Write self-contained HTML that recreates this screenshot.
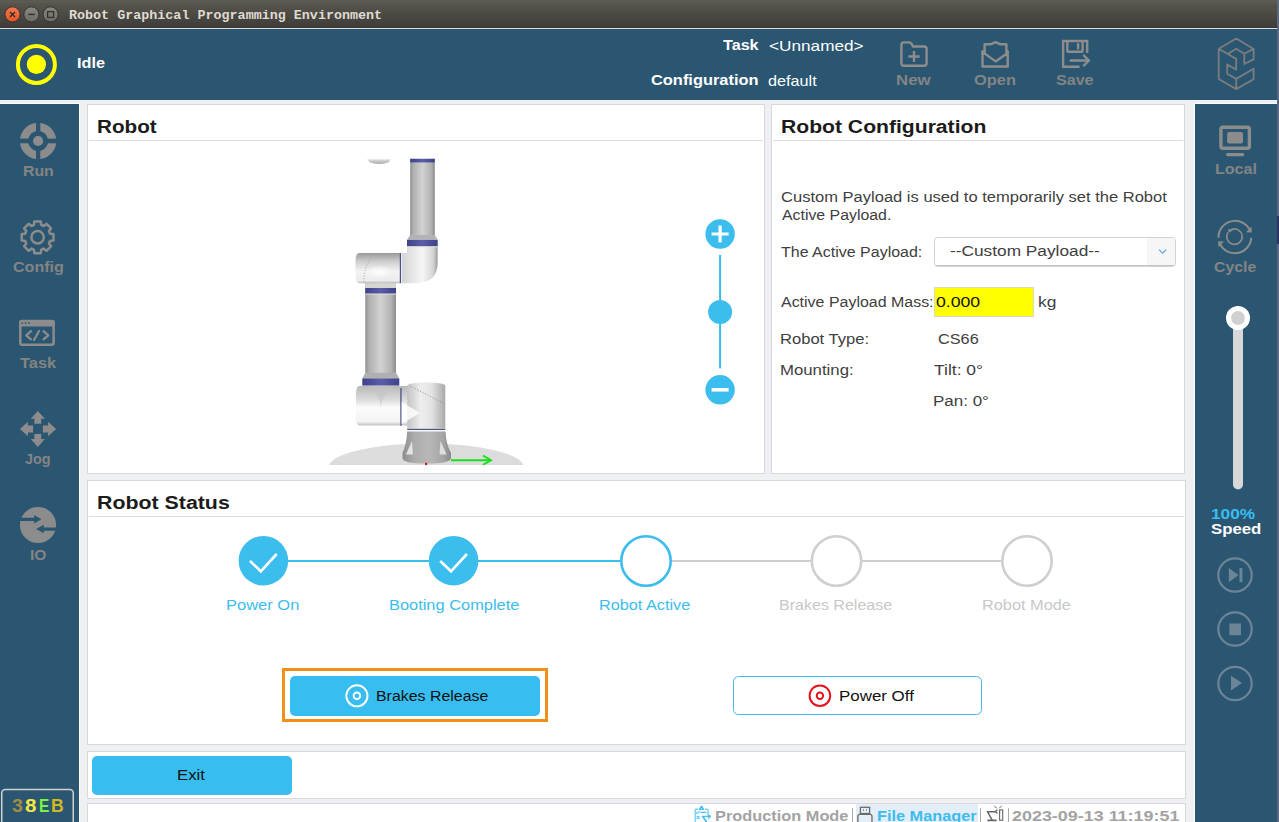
<!DOCTYPE html>
<html><head><meta charset="utf-8">
<style>
*{margin:0;padding:0;box-sizing:border-box}
html,body{width:1279px;height:822px;overflow:hidden;background:#eff0f4;font-family:"Liberation Sans",sans-serif;position:relative}
.a{position:absolute}
.tx{position:absolute;white-space:pre;transform-origin:0 0}
svg{position:absolute;overflow:visible}
#title{left:0;top:0;width:1279px;height:28px;background:linear-gradient(#5b5850 0px,#5e5b52 1.5px,#57544c 4px,#3f3d39 27px,#36342f 28px)}
#hdrline{left:0;top:28px;width:1279px;height:1px;background:#dcdcdc}
#hdr{left:0;top:29px;width:1279px;height:71px;background:#2b5671}
#lside{left:0;top:104px;width:79px;height:718px;background:#2b5671}
#rside{left:1195px;top:104px;width:84px;height:718px;background:#2b5671}
.panel{position:absolute;background:#fff;border:1px solid #d9d9d9}
.hl{position:absolute;height:1px;background:#dcdcdc}
</style></head><body>
<div id="title" class="a"></div>
<div id="hdrline" class="a"></div>
<div id="hdr" class="a"></div>
<div class="a" style="left:0;top:100px;width:1279px;height:4px;background:#eff0f4"></div>
<div id="lside" class="a"></div>
<div class="a" style="left:0;top:103px;width:79px;height:1px;background:#fbfbfc"></div>
<div class="a" style="left:79px;top:103px;width:1px;height:719px;background:#fbfbfc"></div>
<div id="rside" class="a"></div>
<div class="a" style="left:1194px;top:103px;width:1px;height:719px;background:#fbfbfc"></div>
<div class="a" style="left:1194px;top:103px;width:85px;height:1px;background:#fbfbfc"></div>

<!-- panels -->
<div class="panel" style="left:87px;top:104px;width:678px;height:370px"></div>
<div class="hl" style="left:89px;top:140px;width:674px"></div>
<div class="panel" style="left:771px;top:104px;width:414px;height:370px"></div>
<div class="hl" style="left:773px;top:140px;width:410px"></div>
<div class="panel" style="left:87px;top:480px;width:1099px;height:265px"></div>
<div class="hl" style="left:89px;top:516px;width:1095px"></div>
<div class="panel" style="left:87px;top:751px;width:1099px;height:48px"></div>
<div class="panel" style="left:87px;top:803px;width:1099px;height:30px"></div>

<!--ICONS-->
<svg width="1279" height="822" viewBox="0 0 1279 822" style="left:0;top:0">
<defs>
<linearGradient id="tubeH" x1="0" y1="0" x2="1" y2="0">
<stop offset="0" stop-color="#8e8e8e"/><stop offset="0.12" stop-color="#b0b0b0"/><stop offset="0.5" stop-color="#d2d2d2"/><stop offset="0.85" stop-color="#b2b2b2"/><stop offset="1" stop-color="#8c8c8c"/>
</linearGradient>
<linearGradient id="elbowH" x1="0" y1="0" x2="1" y2="0">
<stop offset="0" stop-color="#cfcfcf"/><stop offset="0.3" stop-color="#e4e4e4"/><stop offset="0.6" stop-color="#f6f6f6"/><stop offset="0.88" stop-color="#d4d4d4"/><stop offset="1" stop-color="#9c9c9c"/>
</linearGradient>
<linearGradient id="jointV" x1="0" y1="0" x2="0" y2="1">
<stop offset="0" stop-color="#9a9a9a"/><stop offset="0.3" stop-color="#d0d0d0"/><stop offset="0.6" stop-color="#f2f2f2"/><stop offset="0.92" stop-color="#ececec"/><stop offset="1" stop-color="#b8b8b8"/>
</linearGradient>
<linearGradient id="jointV2" x1="0" y1="0" x2="0" y2="1">
<stop offset="0" stop-color="#b8b8b8"/><stop offset="0.35" stop-color="#dcdcdc"/><stop offset="0.55" stop-color="#fcfcfc"/><stop offset="0.9" stop-color="#f4f4f4"/><stop offset="1" stop-color="#c0c0c0"/>
</linearGradient>
<linearGradient id="bjH" x1="0" y1="0" x2="1" y2="0">
<stop offset="0" stop-color="#c4c4c4"/><stop offset="0.35" stop-color="#ededed"/><stop offset="0.65" stop-color="#e2e2e2"/><stop offset="1" stop-color="#a8a8a8"/>
</linearGradient>
<linearGradient id="baseH" x1="0" y1="0" x2="1" y2="0">
<stop offset="0" stop-color="#8c8c8c"/><stop offset="0.25" stop-color="#adadad"/><stop offset="0.55" stop-color="#b8b8b8"/><stop offset="0.85" stop-color="#a4a4a4"/><stop offset="1" stop-color="#888888"/>
</linearGradient>
<linearGradient id="bandH" x1="0" y1="0" x2="1" y2="0">
<stop offset="0" stop-color="#3f4288"/><stop offset="0.5" stop-color="#5a5da8"/><stop offset="1" stop-color="#3f4288"/>
</linearGradient>
<linearGradient id="diskV" x1="0" y1="0" x2="0" y2="1">
<stop offset="0" stop-color="#e6e6e6"/><stop offset="1" stop-color="#a8a8a8"/>
</linearGradient>
<radialGradient id="hiX" cx="0.5" cy="0.5" r="0.5"><stop offset="0" stop-color="#ffffff" stop-opacity="0.9"/><stop offset="1" stop-color="#ffffff" stop-opacity="0"/></radialGradient>
<clipPath id="vclip"><rect x="88" y="141" width="676" height="324"/></clipPath>
</defs>
<g clip-path="url(#vclip)">
<!-- floor -->
<ellipse cx="426.3" cy="467" rx="97.5" ry="23.5" fill="#dcdcdc"/>
<!-- floating disk -->
<path d="M367.2 158.9 H391.2 L388.8 162.2 Q385 163.9 379.2 163.9 Q373.4 163.9 369.6 162.2 Z" fill="url(#diskV)"/><path d="M367.6 159.3 H390.8" stroke="#f0f0f0" stroke-width="0.8"/>
<!-- upper tube -->
<rect x="410.2" y="158.8" width="24.6" height="78" fill="url(#tubeH)"/>
<rect x="410.2" y="158.8" width="24.6" height="3.6" fill="url(#bandH)"/>
<path d="M410.2 235 H434.8 L437.7 239.8 H407 Z" fill="#b4b4b4"/>
<!-- elbow -->
<path d="M407 246.6 H437.7 V262 Q437.7 283.2 416 283.2 H400 V253 H407 Z" fill="url(#elbowH)"/>
<rect x="407" y="239.8" width="30.7" height="6.8" fill="url(#bandH)"/>
<path d="M407 246.8 H437.7" stroke="#e8e8dc" stroke-width="1"/>
<!-- horizontal wrist joint -->
<path d="M359.5 253 H400.2 V283.2 H359.5 Q355.5 283.2 355.5 275 V261 Q355.5 253 359.5 253 Z" fill="url(#jointV)"/>
<ellipse cx="379" cy="272" rx="14" ry="7" fill="url(#hiX)"/>
<path d="M373 255 Q363 268 364 283" fill="none" stroke="#9a9a9a" stroke-width="0.8" stroke-dasharray="1.2 1.6"/>
<rect x="399.8" y="253" width="1.2" height="30.2" fill="#4a4f86"/>
<rect x="401" y="253" width="0.8" height="30.2" fill="#f4f4f4"/>
<!-- lower tube -->
<rect x="365.3" y="283" width="30.7" height="91" fill="url(#tubeH)"/>
<path d="M365.3 283.2 H396 V288 H365.3 Z" fill="#d6d6d0"/>
<rect x="365.3" y="288" width="30.7" height="6" fill="url(#bandH)"/>
<path d="M365.3 294 H396" stroke="#e4e4dc" stroke-width="1"/>
<path d="M365.3 372.7 H396 L399.3 378.4 H362.3 Z" fill="#b0b0b0"/>
<rect x="362.3" y="378.4" width="37" height="7.2" fill="url(#bandH)"/>
<!-- lower horizontal joint -->
<path d="M359.5 386 H408 V425.5 H359.5 Q355.9 425.5 355.9 417 V395 Q355.9 386 359.5 386 Z" fill="url(#jointV2)"/>
<path d="M368 386 Q381 396 381 408 Q381 396 394 386 Z" fill="#c4c4c4" opacity="0.55"/>
<rect x="400.3" y="388" width="1.3" height="37.6" fill="#4a4f86"/>
<!-- base joint vertical -->
<path d="M407.2 386 Q407.2 382.5 426.2 382.5 Q445.3 382.5 445.3 386 V428.5 H407.2 Z" fill="url(#bjH)"/>
<path d="M401.6 402 L420 413 L401.6 424 Z" fill="#ffffff" opacity="0.8"/>
<path d="M410 386 L445 404" fill="none" stroke="#8a8a8a" stroke-width="0.8" stroke-dasharray="1.2 1.6"/>
<path d="M407.2 429.3 H445.3" stroke="#4e5484" stroke-width="1.3"/>
<path d="M408 430.9 H444.5" stroke="#f0f0f0" stroke-width="1"/>
<!-- base -->
<path d="M407.2 431.4 H445.6 Q446 444 451 453 V458 Q451 463.5 426.2 463.5 Q402.5 463.5 402.5 458 V453 Q406.5 444 407.2 431.4 Z" fill="url(#baseH)"/>
<path d="M412 441 L406 454.5 H413 Z" fill="#e4e4e4"/>
<path d="M440.5 441 L446.5 454.5 H439.5 Z" fill="#e0e0e0"/>
<!-- axes -->
<path d="M451 460.2 H490" stroke="#16e016" stroke-width="1.9"/>
<path d="M483 455.5 L491 460.2 L483 464.8" fill="none" stroke="#16e016" stroke-width="1.9"/>
<rect x="425" y="462.8" width="2.2" height="2.2" fill="#ee1111"/>
</g>
</svg>

<svg width="1279" height="822" viewBox="0 0 1279 822" style="left:0;top:0">
<defs>
<linearGradient id="gClose" x1="0" y1="0" x2="0" y2="1"><stop offset="0" stop-color="#f47a52"/><stop offset="1" stop-color="#e6531f"/></linearGradient>
<linearGradient id="gGray" x1="0" y1="0" x2="0" y2="1"><stop offset="0" stop-color="#8a8984"/><stop offset="1" stop-color="#6b6a65"/></linearGradient>
</defs>
<!-- title buttons -->
<circle cx="12.5" cy="14.4" r="7.6" fill="url(#gClose)" stroke="#33322e" stroke-width="1"/>
<path d="M10 12 L15 17 M15 12 L10 17" stroke="#2f2e2a" stroke-width="1.4"/>
<circle cx="31.4" cy="14.4" r="7.6" fill="url(#gGray)" stroke="#33322e" stroke-width="1"/>
<path d="M28.2 14.4 H34.8" stroke="#33322e" stroke-width="1.5"/>
<circle cx="50.6" cy="14.4" r="7.6" fill="url(#gGray)" stroke="#33322e" stroke-width="1"/>
<rect x="47.6" y="11.6" width="6" height="5.8" fill="none" stroke="#33322e" stroke-width="1.3"/>
<!-- idle -->
<circle cx="36.4" cy="64.4" r="18.5" fill="none" stroke="#ffff00" stroke-width="4"/>
<circle cx="36.4" cy="64.4" r="9.6" fill="#ffff00"/>
<!-- new/open/save -->
<g fill="none" stroke="#8d8d8d" stroke-width="2.4" stroke-linejoin="round" stroke-linecap="round">
<path d="M901.4 63.2 V44.9 Q901.4 42.4 903.9 42.4 H909.5 Q910.6 42.4 911.2 43.4 L913.2 46.5 H924.1 Q926.6 46.5 926.6 49 V63.2 Q926.6 65.7 924.1 65.7 H903.9 Q901.4 65.7 901.4 63.2 Z"/>
<path d="M908.4 56.5 H919.6 M914 50.9 V62.1" stroke-linecap="butt"/>
<path d="M984.6 52.4 V44.3 H990.4 L995.6 42.2 L1000.4 44.3 H1006.4 V52.4"/>
<path d="M982.5 52 L984.6 50.7 M1007.7 52 L1006.4 50.7" />
<path d="M982.5 51.5 V66.5 H1007.7 V51.5 M983.8 52.9 L995.6 61.4 L1007.7 52.9"/>
<path d="M1079.6 66.7 H1063.1 V41 H1087.2 V52.9" stroke-linejoin="miter" stroke-linecap="butt"/>
<path d="M1067.3 41 V50.5 Q1067.3 51.8 1068.6 51.8 H1081.3 Q1082.6 51.8 1082.6 50.5 V41" stroke-linecap="butt"/>
<path d="M1078.1 44.3 V48.3"/>
<path d="M1070.6 60.5 H1089 M1083.9 55.5 L1089 60.5 L1083.9 65.5"/>
</g>
<!-- logo -->
<g fill="none" stroke="#7a7c7e" stroke-width="1.8" stroke-linejoin="round">
<path d="M1236.2 38.5 L1253.6 48.9 V59.4 L1244.3 64 V53.8 L1236.2 48.7 L1228 53.8 M1218.7 48.7 L1236.2 38.5 M1218.7 48.7 V79 L1236.2 89.1 L1253.6 79.2 V68.7 L1236.2 78.9 L1227.2 73.8 V64.5 L1236.2 69.6 V58.9 L1218.7 48.7 M1236.2 78.9 V89.1 M1244.3 53.8 L1253.6 48.9"/>
</g>

<!-- left sidebar icons -->
<g fill="#8c8c8c">
<path fill-rule="evenodd" d="M38.1 122.8 A18.2 18.2 0 1 1 38.09 122.8 Z M38.1 131 A10 10 0 1 0 38.11 131 Z"/>
<circle cx="38.1" cy="141" r="5.1"/>
</g>
<g fill="#2b5671"><rect x="36" y="120" width="4.3" height="12"/><rect x="36" y="150" width="4.3" height="12"/><rect x="17" y="138.6" width="12" height="4.7"/><rect x="47.2" y="138.6" width="12" height="4.7"/></g>
<!-- gear -->
<g fill="none" stroke="#8c8c8c" stroke-width="2.5" stroke-linejoin="round">
<path id="gearp" d="M33.94 224.93 L34.37 221.43 L40.83 221.43 L41.26 224.93 A12.9 12.9 0 0 1 43.76 225.96 L46.54 223.79 L51.11 228.36 L48.94 231.14 A12.9 12.9 0 0 1 49.97 233.64 L53.47 234.07 L53.47 240.53 L49.97 240.96 A12.9 12.9 0 0 1 48.94 243.46 L51.11 246.24 L46.54 250.81 L43.76 248.64 A12.9 12.9 0 0 1 41.26 249.67 L40.83 253.17 L34.37 253.17 L33.94 249.67 A12.9 12.9 0 0 1 31.44 248.64 L28.66 250.81 L24.09 246.24 L26.26 243.46 A12.9 12.9 0 0 1 25.23 240.96 L21.73 240.53 L21.73 234.07 L25.23 233.64 A12.9 12.9 0 0 1 26.26 231.14 L24.09 228.36 L28.66 223.79 L31.44 225.96 A12.9 12.9 0 0 1 33.94 224.93 Z"/>
<circle cx="37.6" cy="237.3" r="6.2"/>
</g>
<!-- task -->
<g fill="none" stroke="#8c8c8c" stroke-width="2.5">
<rect x="20.3" y="321.1" width="33.3" height="23.6" rx="2"/>
</g>
<rect x="19.1" y="319.9" width="35.7" height="6.5" rx="2" fill="#8c8c8c"/>
<g fill="#2b5671"><circle cx="22.2" cy="323.1" r="0.9"/><circle cx="25.6" cy="323.1" r="0.9"/><circle cx="29" cy="323.1" r="0.9"/></g>
<g fill="none" stroke="#8c8c8c" stroke-width="2.2" stroke-linecap="round" stroke-linejoin="round">
<path d="M31 331.2 L26.2 335.3 L31 339.4 M39 331 L34 340 M43.5 331.2 L48.3 335.3 L43.5 339.4" />
</g>
<!-- jog -->
<g fill="#8c8c8c">
<path d="M37.8 410.9 L44.8 418.7 H41.2 V423.8 H34.4 V418.7 H30.8 Z"/>
<path d="M37.8 446.9 L44.8 439.1 H41.2 V434.0 H34.4 V439.1 H30.8 Z"/>
<path d="M19.9 429 L27.9 421.8 V425.6 H33.1 V432.4 H27.9 V436.2 Z"/>
<path d="M56.1 429 L48.1 421.8 V425.6 H42.9 V432.4 H48.1 V436.2 Z"/>
</g>
<!-- io -->
<circle cx="38" cy="525" r="18.1" fill="#8c8c8c"/>
<g fill="#2b5671">
<path d="M18 517.8 H34.2 V515 L41.4 519.3 L34.2 523.6 V521 H18 Z"/>
<path d="M58 527.4 H43.8 V524.8 L36.1 529.1 L43.8 533.3 V530.8 H58 Z"/>
</g>

<!-- local -->
<rect x="1220.9" y="127.3" width="28.5" height="20.9" rx="2" fill="none" stroke="#8c8c8c" stroke-width="3.4"/>
<rect x="1227.1" y="132" width="15.9" height="11.5" rx="2" fill="#8c8c8c"/>
<rect x="1226" y="152.9" width="18.3" height="3.4" rx="1.7" fill="#8c8c8c"/>
<!-- cycle -->
<g fill="none" stroke="#8c8c8c" stroke-width="2" stroke-linecap="butt">
<path d="M1218.5 237.8 A16.5 16.5 0 0 1 1250.6 232"/>
<path d="M1251.3 237.8 A16.5 16.5 0 0 1 1219.2 242"/>
<path d="M1228 232.5 A7.7 7.7 0 1 0 1231 229.8" stroke-width="1.6"/>
</g>
<g fill="#8c8c8c">
<path d="M1251.6 226.5 L1251.6 232.5 L1246 232.3 Z"/>
<path d="M1218.3 247.3 L1218.3 241.2 L1223.8 241.5 Z"/>
<path d="M1228.6 228.4 L1233 230.5 L1228.2 232.7 Z"/>
</g>
<!-- slider -->
<rect x="1233" y="318" width="10" height="171.5" rx="5" fill="#d8d8d8"/>
<circle cx="1238" cy="318" r="12" fill="#ffffff"/>
<circle cx="1238" cy="318" r="6.9" fill="#d0d0d0"/>
<!-- run controls -->
<g fill="none" stroke="#6b8596" stroke-width="2.2">
<circle cx="1235" cy="575" r="16.7"/>
<circle cx="1235" cy="629" r="16.7"/>
<circle cx="1235" cy="683.5" r="16.7"/>
</g>
<g fill="#6b8596">
<path d="M1228.8 568 L1238.5 575.1 L1228.8 582.2 Z"/>
<rect x="1239.5" y="568" width="2.9" height="14.2"/>
<rect x="1229.4" y="623.5" width="11.6" height="11.7"/>
<path d="M1231 675.7 L1242 683 L1231 690.4 Z"/>
</g>
<!-- badge -->
<rect x="1.75" y="789.6" width="71.5" height="40" rx="3.5" fill="none" stroke="#d0d0d0" stroke-width="1.5"/>
<!-- right edge strip -->
<rect x="1277" y="0" width="2" height="822" fill="#5b6a80"/>
<rect x="1277" y="216" width="2" height="28" fill="#2f3262"/>

<!-- status steps -->
<path d="M288 561 H620 M672 561" stroke="#3bbdee" stroke-width="2"/>
<path d="M672 561 H1001" stroke="#cfcfcf" stroke-width="2"/>
<circle cx="263.4" cy="560.7" r="24.8" fill="#3bbdee"/>
<circle cx="453.6" cy="560.7" r="24.8" fill="#3bbdee"/>
<g fill="none" stroke="#fff" stroke-width="2.6" stroke-linejoin="miter"><path d="M250 561 L260.8 571.3 L276.7 554"/><path d="M440.2 561 L451 571.3 L466.9 554"/></g>
<circle cx="646" cy="561" r="24.7" fill="#fff" stroke="#3bbdee" stroke-width="2.6"/>
<circle cx="836.5" cy="561" r="24.7" fill="#fff" stroke="#cfcfcf" stroke-width="2.6"/>
<circle cx="1027" cy="561" r="24.7" fill="#fff" stroke="#cfcfcf" stroke-width="2.6"/>
<!-- buttons -->
<rect x="283.5" y="669.5" width="263" height="51" fill="none" stroke="#f09019" stroke-width="3"/>
<rect x="290" y="676" width="250" height="40" rx="5" fill="#38bdf0"/>
<circle cx="356.9" cy="695.8" r="10.6" fill="none" stroke="#fff" stroke-width="1.9"/>
<circle cx="356.9" cy="695.8" r="3.3" fill="none" stroke="#fff" stroke-width="1.9"/>
<rect x="733.5" y="676.5" width="248" height="38" rx="5" fill="#fff" stroke="#3bbdee" stroke-width="1"/>
<circle cx="819.9" cy="695.7" r="10.3" fill="none" stroke="#e8101a" stroke-width="2"/>
<circle cx="819.9" cy="695.7" r="3.2" fill="none" stroke="#e8101a" stroke-width="2"/>
<rect x="92" y="756" width="200" height="39" rx="5" fill="#38bdf0"/>
<!-- zoom controls -->
<path d="M720.1 254.8 V368.4" stroke="#3bbdee" stroke-width="2"/>
<circle cx="720.1" cy="234" r="14.7" fill="#3bbdee"/>
<circle cx="720.1" cy="311.9" r="12" fill="#3bbdee"/>
<circle cx="720.1" cy="389.8" r="14.7" fill="#3bbdee"/>
<path d="M711.6 234 H728.6 M720.1 225.5 V242.5" stroke="#fff" stroke-width="3.2"/>
<path d="M711.6 389.8 H728.6" stroke="#fff" stroke-width="3.6"/>
<!-- dropdown -->
<rect x="934.5" y="237.5" width="241" height="29" rx="3" fill="#fff" stroke="#d2d2d2" stroke-width="1"/>
<path d="M936 265.5 H1174" stroke="#c4c4c4" stroke-width="1.2"/>
<rect x="1147" y="238" width="28" height="27" fill="#f6f6f6"/>
<path d="M1159 249.6 L1162.6 253.2 L1166.2 249.6" fill="none" stroke="#5aa5e0" stroke-width="1.2"/>
<!-- mass input -->
<rect x="934.5" y="287.5" width="99" height="29" fill="#ffff00" stroke="#d8d8c0" stroke-width="1"/>
<!-- status bar -->
<rect x="856" y="804" width="122" height="18" fill="#e4eef8"/>

<!-- status bar icons -->
<g fill="none" stroke="#48bff0" stroke-width="1.4" stroke-linecap="round" stroke-linejoin="round">
<path d="M695.2 822 V810 Q695.2 809.3 696.2 809.3 H697.5 M705.5 809.3 H707.2 Q708.1 809.3 708.1 810.2 V815.2" opacity="0.75"/>
<path d="M699.5 809.2 L701.5 806.2 L703.5 809.2 Z"/>
<path d="M701.2 812.4 H706"/>
<path d="M696.3 812.3 L697.5 813.6 L699.5 811.2" opacity="0.7"/>
<path d="M697 816.5 L699.2 818.6 M699.2 816.5 L697 818.6" opacity="0.8"/>
<path d="M702.5 816.4 H710.3 M708.6 815 L710.3 816.4 L708.6 818" />
<path d="M703 816.8 L706.5 822" stroke-width="1.8"/>
</g>
<g stroke="#a8a8a8" stroke-width="1"><path d="M852.5 808.2 V822 M980.5 808.2 V822 M1008.5 808.2 V822"/></g>
<g fill="none" stroke="#6a6a6a" stroke-width="1.3">
<rect x="860.4" y="807.3" width="9.2" height="6.2"/>
<path d="M857.9 822 V816.3 Q857.9 814.3 859.9 814.3 H870 Q872 814.3 872 816.3 V822"/>
</g>
<g fill="#6a6a6a"><rect x="863" y="809.3" width="0.9" height="1.5"/><rect x="866.1" y="809.3" width="0.9" height="1.5"/></g>
<g fill="none" stroke="#666" stroke-width="1.3" stroke-linecap="round">
<path d="M988.1 820.4 H995.8" stroke-width="1.8"/>
<path d="M991.9 819.6 L987.6 811.8 H995.4" stroke-width="1.5"/>
<path d="M995.4 811.5 L997 810 M995.4 811.5 L997 813"/>
<rect x="999.6" y="809.9" width="3.1" height="10.3" stroke-width="1.1"/>
<path d="M994.5 806 L996.5 808 M1001.5 806 L999.5 808" stroke-width="1"/>
</g>
</svg>


<div class="tx" style="left:69.26px;top:9px;font-size:13.33px;line-height:13.33px;font-weight:bold;color:#dfdbd2;font-family:'Liberation Mono';transform:scaleX(1.0038);">Robot Graphical Programming Environment</div>
<div class="tx" style="left:76.58px;top:56px;font-size:14.3px;line-height:14.3px;font-weight:bold;color:#ffffff;font-family:'Liberation Sans';transform:scaleX(1.1375);">Idle</div>
<div class="tx" style="left:722.50px;top:38px;font-size:14.3px;line-height:14.3px;font-weight:bold;color:#ffffff;font-family:'Liberation Sans';transform:scaleX(1.1289);">Task</div>
<div class="tx" style="left:769.19px;top:39px;font-size:14.6px;line-height:14.6px;font-weight:normal;color:#ffffff;font-family:'Liberation Sans';transform:scaleX(1.1778);">&lt;Unnamed&gt;</div>
<div class="tx" style="left:651.09px;top:73px;font-size:14.3px;line-height:14.3px;font-weight:bold;color:#ffffff;font-family:'Liberation Sans';transform:scaleX(1.1470);">Configuration</div>
<div class="tx" style="left:768.29px;top:74px;font-size:14.6px;line-height:14.6px;font-weight:normal;color:#ffffff;font-family:'Liberation Sans';transform:scaleX(1.1098);">default</div>
<div class="tx" style="left:896.35px;top:73px;font-size:14.3px;line-height:14.3px;font-weight:bold;color:#848484;font-family:'Liberation Sans';transform:scaleX(1.1765);">New</div>
<div class="tx" style="left:974.39px;top:73px;font-size:14.3px;line-height:14.3px;font-weight:bold;color:#848484;font-family:'Liberation Sans';transform:scaleX(1.1495);">Open</div>
<div class="tx" style="left:1056.45px;top:73px;font-size:14.3px;line-height:14.3px;font-weight:bold;color:#848484;font-family:'Liberation Sans';transform:scaleX(1.1244);">Save</div>
<div class="tx" style="left:22.61px;top:164px;font-size:14.3px;line-height:14.3px;font-weight:bold;color:#848484;font-family:'Liberation Sans';transform:scaleX(1.1064);">Run</div>
<div class="tx" style="left:12.60px;top:260px;font-size:14.3px;line-height:14.3px;font-weight:bold;color:#848484;font-family:'Liberation Sans';transform:scaleX(1.1251);">Config</div>
<div class="tx" style="left:19.90px;top:356px;font-size:14.3px;line-height:14.3px;font-weight:bold;color:#848484;font-family:'Liberation Sans';transform:scaleX(1.1447);">Task</div>
<div class="tx" style="left:25.00px;top:452px;font-size:14.3px;line-height:14.3px;font-weight:bold;color:#848484;font-family:'Liberation Sans';transform:scaleX(1.0078);">Jog</div>
<div class="tx" style="left:29.53px;top:548px;font-size:14.3px;line-height:14.3px;font-weight:bold;color:#848484;font-family:'Liberation Sans';transform:scaleX(1.0866);">IO</div>
<div class="tx" style="left:1214.80px;top:162px;font-size:14.3px;line-height:14.3px;font-weight:bold;color:#848484;font-family:'Liberation Sans';transform:scaleX(1.1233);">Local</div>
<div class="tx" style="left:1214.41px;top:260px;font-size:14.3px;line-height:14.3px;font-weight:bold;color:#848484;font-family:'Liberation Sans';transform:scaleX(1.1056);">Cycle</div>
<div class="tx" style="left:1211.22px;top:507px;font-size:14.3px;line-height:14.3px;font-weight:bold;color:#38bdf0;font-family:'Liberation Sans';transform:scaleX(1.2092);">100%</div>
<div class="tx" style="left:1211.44px;top:522px;font-size:14.3px;line-height:14.3px;font-weight:bold;color:#ffffff;font-family:'Liberation Sans';transform:scaleX(1.1729);">Speed</div>
<div class="tx" style="left:12.39px;top:797px;font-size:18.6px;line-height:18.6px;font-weight:bold;color:#a08c44;font-family:'Liberation Sans';transform:scaleX(1.0635);">3</div>
<div class="tx" style="left:25.26px;top:797px;font-size:18.6px;line-height:18.6px;font-weight:bold;color:#f2e646;font-family:'Liberation Sans';transform:scaleX(1.1075);">8</div>
<div class="tx" style="left:39.04px;top:797px;font-size:18.6px;line-height:18.6px;font-weight:bold;color:#7cf442;font-family:'Liberation Sans';transform:scaleX(0.8277);">E</div>
<div class="tx" style="left:50.90px;top:797px;font-size:18.6px;line-height:18.6px;font-weight:bold;color:#d2b81e;font-family:'Liberation Sans';transform:scaleX(0.9462);">B</div>
<div class="tx" style="left:97.01px;top:118px;font-size:18.8px;line-height:18.8px;font-weight:bold;color:#1b1b1b;font-family:'Liberation Sans';transform:scaleX(1.0995);">Robot</div>
<div class="tx" style="left:780.88px;top:118px;font-size:18.8px;line-height:18.8px;font-weight:bold;color:#1b1b1b;font-family:'Liberation Sans';transform:scaleX(1.1248);">Robot Configuration</div>
<div class="tx" style="left:780.93px;top:189px;font-size:15.5px;line-height:15.5px;font-weight:normal;color:#404040;font-family:'Liberation Sans';transform:scaleX(1.0663);">Custom Payload is used to temporarily set the Robot</div>
<div class="tx" style="left:781.70px;top:207px;font-size:15.5px;line-height:15.5px;font-weight:normal;color:#404040;font-family:'Liberation Sans';transform:scaleX(1.0234);">Active Payload.</div>
<div class="tx" style="left:781.15px;top:244px;font-size:15.5px;line-height:15.5px;font-weight:normal;color:#404040;font-family:'Liberation Sans';transform:scaleX(1.0315);">The Active Payload:</div>
<div class="tx" style="left:950.36px;top:243px;font-size:15.5px;line-height:15.5px;font-weight:normal;color:#404040;font-family:'Liberation Sans';transform:scaleX(1.1146);">--Custom Payload--</div>
<div class="tx" style="left:781.40px;top:294px;font-size:15.5px;line-height:15.5px;font-weight:normal;color:#404040;font-family:'Liberation Sans';transform:scaleX(1.0295);">Active Payload Mass:</div>
<div class="tx" style="left:936.45px;top:294px;font-size:15.5px;line-height:15.5px;font-weight:normal;color:#111;font-family:'Liberation Sans';transform:scaleX(1.1393);">0.000</div>
<div class="tx" style="left:1038.21px;top:294px;font-size:15.5px;line-height:15.5px;font-weight:normal;color:#404040;font-family:'Liberation Sans';transform:scaleX(1.1217);">kg</div>
<div class="tx" style="left:779.81px;top:331px;font-size:15.5px;line-height:15.5px;font-weight:normal;color:#404040;font-family:'Liberation Sans';transform:scaleX(1.0683);">Robot Type:</div>
<div class="tx" style="left:938.44px;top:331px;font-size:15.5px;line-height:15.5px;font-weight:normal;color:#404040;font-family:'Liberation Sans';transform:scaleX(1.0503);">CS66</div>
<div class="tx" style="left:779.69px;top:362px;font-size:15.5px;line-height:15.5px;font-weight:normal;color:#404040;font-family:'Liberation Sans';transform:scaleX(1.0816);">Mounting:</div>
<div class="tx" style="left:933.83px;top:362px;font-size:15.5px;line-height:15.5px;font-weight:normal;color:#404040;font-family:'Liberation Sans';transform:scaleX(1.1272);">Tilt: 0°</div>
<div class="tx" style="left:932.67px;top:393px;font-size:15.5px;line-height:15.5px;font-weight:normal;color:#404040;font-family:'Liberation Sans';transform:scaleX(1.0955);">Pan: 0°</div>
<div class="tx" style="left:97.16px;top:494px;font-size:18.8px;line-height:18.8px;font-weight:bold;color:#1b1b1b;font-family:'Liberation Sans';transform:scaleX(1.1362);">Robot Status</div>
<div class="tx" style="left:226.21px;top:597px;font-size:15.5px;line-height:15.5px;font-weight:normal;color:#3bbdee;font-family:'Liberation Sans';transform:scaleX(1.0638);">Power On</div>
<div class="tx" style="left:388.52px;top:597px;font-size:15.5px;line-height:15.5px;font-weight:normal;color:#3bbdee;font-family:'Liberation Sans';transform:scaleX(1.0579);">Booting Complete</div>
<div class="tx" style="left:598.53px;top:597px;font-size:15.5px;line-height:15.5px;font-weight:normal;color:#3bbdee;font-family:'Liberation Sans';transform:scaleX(1.0484);">Robot Active</div>
<div class="tx" style="left:778.75px;top:597px;font-size:15.5px;line-height:15.5px;font-weight:normal;color:#c8c8c8;font-family:'Liberation Sans';transform:scaleX(1.0346);">Brakes Release</div>
<div class="tx" style="left:981.92px;top:597px;font-size:15.5px;line-height:15.5px;font-weight:normal;color:#c8c8c8;font-family:'Liberation Sans';transform:scaleX(1.0533);">Robot Mode</div>
<div class="tx" style="left:376.46px;top:688px;font-size:15.5px;line-height:15.5px;font-weight:normal;color:#111;font-family:'Liberation Sans';transform:scaleX(1.0262);">Brakes Release</div>
<div class="tx" style="left:838.68px;top:688px;font-size:15.5px;line-height:15.5px;font-weight:normal;color:#111;font-family:'Liberation Sans';transform:scaleX(1.0908);">Power Off</div>
<div class="tx" style="left:177.09px;top:767px;font-size:15.5px;line-height:15.5px;font-weight:normal;color:#111;font-family:'Liberation Sans';transform:scaleX(1.0778);">Exit</div>
<div class="tx" style="left:715.28px;top:810px;font-size:13.9px;line-height:13.9px;font-weight:bold;color:#a3a3a3;font-family:'Liberation Sans';transform:scaleX(1.1764);">Production Mode</div>
<div class="tx" style="left:877.48px;top:810px;font-size:13.9px;line-height:13.9px;font-weight:bold;color:#3bbdee;font-family:'Liberation Sans';transform:scaleX(1.1740);">File Manager</div>
<div class="tx" style="left:1011.94px;top:810px;font-size:13.9px;line-height:13.9px;font-weight:bold;color:#a3a3a3;font-family:'Liberation Sans';transform:scaleX(1.2901);">2023-09-13 11:19:51</div>
</body></html>
